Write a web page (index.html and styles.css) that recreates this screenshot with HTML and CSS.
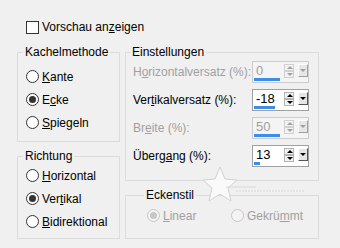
FILE: index.html
```html
<!DOCTYPE html>
<html lang="de">
<head>
  <meta charset="UTF-8">
  <title>Kacheln</title>
  <link rel="stylesheet" href="styles.css">
</head>
<body>
  <div class="dialog">
    <div class="check-row"><span class="checkbox"></span>Vorschau an<u>z</u>eigen</div>

    <div class="columns">
      <div class="col">
        <fieldset class="group group-method">
          <legend>Kachelmethode</legend>
          <div class="radio"><span class="dot"></span><u>K</u>ante</div>
          <div class="radio"><span class="dot on"></span>E<u>c</u>ke</div>
          <div class="radio"><span class="dot"></span><u>S</u>piegeln</div>
        </fieldset>
        <fieldset class="group group-dir">
          <legend>Richtung</legend>
          <div class="radio"><span class="dot"></span><u>H</u>orizontal</div>
          <div class="radio"><span class="dot on"></span>Ver<u>t</u>ikal</div>
          <div class="radio"><span class="dot"></span><u>B</u>idirektional</div>
        </fieldset>
      </div>

      <div class="col">
        <fieldset class="group group-settings">
          <legend>Einstellungen</legend>
          <div class="rows">
            <div class="row disabled">
              <span class="label">H<u>o</u>rizontalversatz (%):</span>
              <div class="spinner">
                <div class="field">0<span class="bar" style="width:26px"></span></div>
                <div class="spin"><span class="up"></span><span class="down"></span></div>
                <div class="drop"></div>
              </div>
            </div>
            <div class="row">
              <span class="label">Ver<u>t</u>ikalversatz (%):</span>
              <div class="spinner">
                <div class="field">-18<span class="bar" style="width:21px"></span></div>
                <div class="spin"><span class="up"></span><span class="down"></span></div>
                <div class="drop"></div>
              </div>
            </div>
            <div class="row disabled">
              <span class="label">Br<u>e</u>ite (%):</span>
              <div class="spinner">
                <div class="field">50<span class="bar" style="width:26px"></span></div>
                <div class="spin"><span class="up"></span><span class="down"></span></div>
                <div class="drop"></div>
              </div>
            </div>
            <div class="row">
              <span class="label">Überg<u>a</u>ng (%):</span>
              <div class="spinner">
                <div class="field">13<span class="bar" style="width:6px"></span></div>
                <div class="spin"><span class="up"></span><span class="down"></span></div>
                <div class="drop"></div>
              </div>
            </div>
          </div>
        </fieldset>
        <fieldset class="group group-corner">
          <legend>Eckenstil</legend>
          <div class="inline-radios">
            <div class="radio disabled first"><span class="dot on"></span><u>L</u>inear</div>
            <div class="radio disabled"><span class="dot"></span>Gekrü<u>m</u>mt</div>
          </div>
        </fieldset>
      </div>
    </div>

    <!-- watermark star over the settings box -->
    <svg class="watermark" width="110" height="40" viewBox="0 0 110 40">
      <polygon points="18,1 23,13 35,14 26,22 29,35 18,28 7,35 10,22 1,14 13,13" fill="#fafafa" stroke="#d2d2d2" stroke-width="1"/>
      <line x1="24" y1="21" x2="54" y2="21" stroke="#d8d8d8" stroke-width="1"/>
      <line x1="34" y1="25" x2="102" y2="25" stroke="#d8d8d8" stroke-width="1" stroke-dasharray="2 1"/>
    </svg>
  </div>
</body>
</html>
```

FILE: styles.css
```css
html, body {
  margin: 0;
  padding: 0;
  background: #f0f0f0;
}

.dialog {
  position: relative;
  width: 340px;
  height: 248px;
  box-sizing: border-box;
  padding: 20px 0 0 17px;
  font-family: "Liberation Sans", Arial, sans-serif;
  font-size: 12px;
  color: #000;
}

.check-row {
  display: flex;
  align-items: center;
  height: 14px;
  margin-left: 9px;
}

.checkbox {
  width: 11px;
  height: 11px;
  border: 1px solid #333;
  background: #fff;
  margin-right: 3px;
}

.columns {
  display: flex;
  gap: 5px;
  margin-top: 11px;
}

.col {
  display: flex;
  flex-direction: column;
  gap: 7px;
}

.group {
  box-sizing: border-box;
  margin: 0;
  border: 1px solid #dcdcdc;
  padding: 0 0 0 8px;
}

.group legend {
  padding: 0 2px;
  margin-left: -3px;
  line-height: 14px;
}

.group-method {
  width: 103px;
  height: 97px;
  padding-top: 6px;
}

.group-dir {
  width: 103px;
  height: 90px;
  padding-top: 1px;
}

.group-settings {
  width: 194px;
  height: 136px;
  padding-left: 7px;
  padding-right: 9px;
}

.group-corner {
  width: 194px;
  height: 51px;
  padding-top: 2px;
  padding-left: 21px;
}

.radio {
  display: flex;
  align-items: center;
  height: 23px;
}

.dot {
  position: relative;
  width: 11px;
  height: 11px;
  border: 1px solid #333;
  border-radius: 50%;
  background: #fff;
  margin-right: 3px;
}

.dot.on::after {
  content: "";
  position: absolute;
  left: 2px;
  top: 2px;
  width: 7px;
  height: 7px;
  border-radius: 50%;
  background: #333;
}

.radio.disabled {
  color: #a0a0a0;
}

.radio.disabled .dot {
  border-color: #c6c6c6;
  background: #f4f4f4;
}

.radio.disabled .dot.on::after {
  background: #c6c6c6;
}

.inline-radios {
  display: flex;
}

.inline-radios .first {
  width: 84px;
}

.rows {
  margin-top: -1px;
}

.row {
  display: flex;
  align-items: center;
  height: 28px;
}

.row .label {
  flex: 1;
}

.row.disabled .label {
  color: #a0a0a0;
}

.spinner {
  display: flex;
  align-items: flex-start;
  width: 57px;
  height: 22px;
  box-sizing: border-box;
  border: 1px solid #a0a0a0;
  background: #fff;
}

.field {
  position: relative;
  width: 31px;
  height: 20px;
  box-sizing: border-box;
  padding-left: 3px;
  line-height: 18px;
  font-size: 13px;
}

.bar {
  position: absolute;
  left: 1px;
  bottom: 1px;
  height: 3px;
  background: #3c8ee6;
}

.spin {
  display: flex;
  flex-direction: column;
  width: 10px;
  margin-top: 2px;
  margin-right: 4px;
}

.spin span {
  position: relative;
  height: 7px;
  box-sizing: border-box;
  border: 1px solid #b4b4b4;
  background: #f2f2f2;
}

.spin .up::after,
.spin .down::after,
.drop::after {
  content: "";
  position: absolute;
  left: 2px;
  border-left: 3px solid transparent;
  border-right: 3px solid transparent;
}

.spin .up::after {
  top: 1px;
  border-bottom: 3px solid #000;
}

.spin .down::after {
  top: 1px;
  border-top: 3px solid #000;
}

.drop {
  position: relative;
  width: 10px;
  height: 13px;
  margin-top: 2px;
  box-sizing: border-box;
  border: 1px solid #fff;
  border-right-color: #555;
  border-bottom-color: #555;
  background: #e6e6e6;
}

.drop::after {
  left: 1px;
  top: 4px;
  border-top: 3px solid #000;
}

.row.disabled .spinner {
  border-color: #cbcbcb;
  background: #f4f4f4;
  color: #a0a0a0;
}

.row.disabled .spin span {
  border-color: #d0d0d0;
}

.row.disabled .spin .up::after {
  border-bottom-color: #a0a0a0;
}

.row.disabled .spin .down::after,
.row.disabled .drop::after {
  border-top-color: #a0a0a0;
}

.row.disabled .drop {
  border-right-color: #a0a0a0;
  border-bottom-color: #a0a0a0;
}

.watermark {
  position: absolute;
  left: 202px;
  top: 166px;
}
```
